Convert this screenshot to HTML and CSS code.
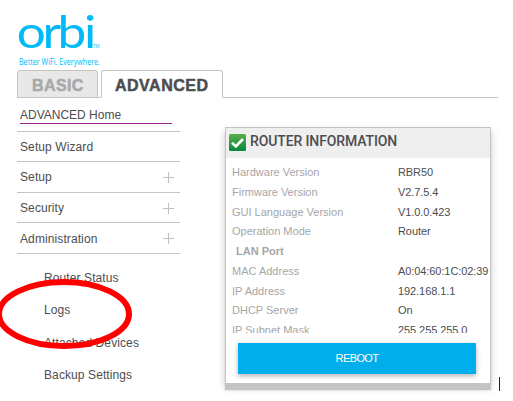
FILE: index.html
```
<!DOCTYPE html>
<html lang="en">
<head>
  <meta charset="UTF-8" />
  <title>Orbi</title>
  <link rel="stylesheet" href="styles.css">
</head>
<body>
  <header class="brand">
    <svg class="logo" width="90" height="62" viewBox="0 0 90 62">
      <text class="word" x="-1 21.6 34.6 58" y="48.5" transform="scale(1.14 1)">orbi</text>
      <text class="tm" x="75" y="48">TM</text>
      <text class="slogan" x="1" y="65" textLength="81" lengthAdjust="spacingAndGlyphs">Better WiFi. Everywhere.</text>
    </svg>
  </header>

  <nav class="tabs">
    <div class="tab basic">BASIC</div>
    <div class="tab active">ADVANCED</div>
  </nav>

  <main class="content">
    <aside class="menu">
      <div class="item home"><span>ADVANCED Home</span></div>
      <div class="item">Setup Wizard</div>
      <div class="item">Setup<i class="plus"></i></div>
      <div class="item">Security<i class="plus"></i></div>
      <div class="item">Administration<i class="plus"></i></div>
      <ul class="submenu">
        <li>Router Status</li>
        <li>Logs</li>
        <li>Attached Devices</li>
        <li>Backup Settings</li>
      </ul>
    </aside>

    <section class="panel">
      <div class="panel-head">
        <svg class="check" width="17" height="17" viewBox="0 0 17 17">
          <defs>
            <linearGradient id="green" x1="0" y1="0" x2="0" y2="1">
              <stop offset="0" stop-color="#5aae49" />
              <stop offset="1" stop-color="#07883f" />
            </linearGradient>
          </defs>
          <rect width="17" height="17" rx="1.5" fill="url(#green)" />
          <path d="M3 8.8L6.8 12.4L14 5" fill="none" stroke="#fff" stroke-width="2.6" />
        </svg>
        <h2>ROUTER INFORMATION</h2>
      </div>
      <dl class="info">
        <dt>Hardware Version</dt><dd>RBR50</dd>
        <dt>Firmware Version</dt><dd>V2.7.5.4</dd>
        <dt>GUI Language Version</dt><dd>V1.0.0.423</dd>
        <dt>Operation Mode</dt><dd>Router</dd>
        <dt class="group">LAN Port</dt><dd></dd>
        <dt>MAC Address</dt><dd>A0:04:60:1C:02:39</dd>
        <dt>IP Address</dt><dd>192.168.1.1</dd>
        <dt>DHCP Server</dt><dd>On</dd>
        <dt>IP Subnet Mask</dt><dd>255.255.255.0</dd>
      </dl>
      <button class="reboot">REBOOT</button>
    </section>
    <span class="caret"></span>
  </main>

  <svg class="circle" width="140" height="80" viewBox="0 0 140 80">
    <ellipse cx="64" cy="40" rx="65" ry="32" />
  </svg>
</body>
</html>
```

FILE: styles.css
```
html, body {
  margin: 0;
  padding: 0;
  height: 100%;
  overflow: hidden;
  background: #fff;
  font-family: "Liberation Sans", Arial, sans-serif;
  font-size: 12px;
  color: #4d4d4f;
}

.brand {
  height: 70px;
  padding-left: 18px;
  box-sizing: border-box;
}

.logo {
  display: block;
  overflow: visible;
  fill: #00b9f7;
}

.word {
  font-family: Lato, sans-serif;
  font-size: 45px;
}

.tm {
  font-family: "Open Sans", sans-serif;
  font-size: 4.5px;
}

.slogan {
  font-family: "Open Sans", sans-serif;
  font-size: 8.5px;
}

.tabs {
  display: flex;
  height: 28px;
  width: 481px;
  margin-left: 17px;
  gap: 3px;
  box-sizing: border-box;
  border-bottom: 1px solid #c4c4c4;
}

.tab {
  box-sizing: border-box;
  height: 28px;
  border: 1px solid #c4c4c4;
  border-radius: 3px 3px 0 0;
  font-size: 16px;
  font-weight: bold;
  line-height: 29px;
  padding-left: 14px;
  -webkit-text-stroke: 0.5px;
}

.basic {
  width: 81px;
  background: #e8e8e8;
  color: #a9a9a9;
  letter-spacing: 0.4px;
}

.active {
  width: 122px;
  padding-left: 13px;
  background: #fff;
  border-bottom-color: #fff;
  letter-spacing: 0.5px;
}

.content {
  display: flex;
}

.menu {
  width: 163px;
  margin: 3px 0 0 17px;
}

.item {
  display: flex;
  align-items: center;
  justify-content: space-between;
  box-sizing: border-box;
  height: 30.6px;
  padding: 1px 6px 0 3px;
  border-bottom: 1px solid #c4c4c4;
  letter-spacing: 0.1px;
}

.home span {
  width: 152px;
  line-height: 15px;
  letter-spacing: 0;
  border-bottom: 1px solid #93278f;
}

.plus {
  width: 11px;
  height: 11px;
  background:
    linear-gradient(#c0c0c0, #c0c0c0) center / 11px 1px no-repeat,
    linear-gradient(#c0c0c0, #c0c0c0) center / 1px 11px no-repeat;
}

.submenu {
  list-style: none;
  margin: 8px 0 0;
  padding: 0 0 0 27px;
  line-height: 32.3px;
  letter-spacing: 0.1px;
}

.panel {
  box-sizing: border-box;
  width: 266px;
  height: 257px;
  margin: 29px 0 0 45px;
  border: 1px solid #c4c4c4;
  background: #fff;
  box-shadow: 0 6px 1px #c4c4c4, 0 4px 8px rgba(0, 0, 0, 0.2);
}

.panel-head {
  display: flex;
  gap: 4px;
  height: 30px;
  padding-left: 3px;
  background: #efefef;
}

.check {
  margin-top: 6px;
}

.panel-head h2 {
  margin: 0;
  font: 500 14px/27px Roboto, sans-serif;
  letter-spacing: -0.12px;
}

.info {
  display: grid;
  grid-template-columns: 166px 1fr;
  grid-auto-rows: 19.75px;
  height: 175px;
  margin: 0;
  padding: 4px 0 0 6px;
  box-sizing: border-box;
  overflow: hidden;
  font-size: 11px;
  line-height: 20px;
  white-space: nowrap;
}

.info dt {
  color: #a6a6a6;
}

.info dd {
  margin: 0;
  letter-spacing: -0.08px;
}

.info .group {
  padding-left: 4px;
  font-weight: bold;
}

.reboot {
  display: block;
  width: 238px;
  height: 31px;
  margin: 10px 0 0 12px;
  padding: 0 0 1px;
  border: 0;
  background: #00aeeb;
  box-shadow: 0 2px 5px rgba(0, 0, 0, 0.3);
  color: #fff;
  font: 11px "Liberation Sans", Arial, sans-serif;
  letter-spacing: -0.6px;
}

.caret {
  width: 1px;
  height: 14px;
  margin: 279px 0 0 8px;
  background: #222;
}

.circle {
  position: absolute;
  left: 0;
  top: 274px;
}

.circle ellipse {
  fill: none;
  stroke: #f00;
  stroke-width: 6;
}
```
